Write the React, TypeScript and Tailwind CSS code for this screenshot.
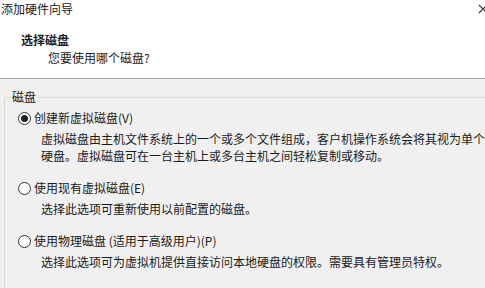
const font = {
  fontFamily: '"Noto Sans CJK SC", "Noto Sans", sans-serif',
};

function Radio({ checked }: { checked?: boolean }) {
  return (
    <span className="flex h-[13px] w-[13px] shrink-0 items-center justify-center rounded-full border border-[#333333] bg-white">
      {checked && <span className="h-[7px] w-[7px] rounded-full bg-[#222222]" />}
    </span>
  );
}

interface OptionProps {
  label: string;
  checked?: boolean;
  lines: string[];
}

function Option({ label, checked, lines }: OptionProps) {
  return (
    <div>
      <div className="flex h-[18px] items-center gap-[3px] pl-[13px]">
        <Radio checked={checked} />
        <span className="whitespace-nowrap">{label}</span>
      </div>
      <div className="mt-[3px] pl-[36px] leading-[17px]">
        {lines.map((l) => (
          <div key={l} className="whitespace-nowrap">
            {l}
          </div>
        ))}
      </div>
    </div>
  );
}

export default function App() {
  return (
    <div
      className="h-[288px] w-[485px] overflow-hidden bg-[#f0f0f0] text-[12px] text-[#1a1a1a]"
      style={font}
    >
      <div className="h-[79px] border-b border-[#a0a0a0] bg-white">
        <div className="flex h-[17px] items-center justify-between">
          <span className="ml-[1px]">添加硬件向导</span>
          <svg width="10" height="10" viewBox="0 0 10 10" className="mr-[-3px]">
            <path d="M1 1 L9 9 M9 1 L1 9" stroke="#333" strokeWidth="1.1" />
          </svg>
        </div>
        <div className="pl-[21px] pt-[15px] font-bold leading-[16px]">选择磁盘</div>
        <div className="pl-[48px] pt-[2px] leading-[16px]">您要使用哪个磁盘?</div>
      </div>

      <div className="relative ml-[4px] mt-[18px] h-[220px] w-[500px] border border-[#dcdcdc]">
        <span className="absolute -top-[9px] left-[6px] bg-[#f0f0f0] px-[1px] leading-[16px]">
          磁盘
        </span>
        <div className="pt-[11px]">
          <Option
            checked
            label="创建新虚拟磁盘(V)"
            lines={[
              "虚拟磁盘由主机文件系统上的一个或多个文件组成，客户机操作系统会将其视为单个",
              "硬盘。虚拟磁盘可在一台主机上或多台主机之间轻松复制或移动。",
            ]}
          />
          <div className="mt-[15px]">
            <Option
              label="使用现有虚拟磁盘(E)"
              lines={["选择此选项可重新使用以前配置的磁盘。"]}
            />
          </div>
          <div className="mt-[15px]">
            <Option
              label="使用物理磁盘 (适用于高级用户)(P)"
              lines={["选择此选项可为虚拟机提供直接访问本地硬盘的权限。需要具有管理员特权。"]}
            />
          </div>
        </div>
      </div>
    </div>
  );
}
